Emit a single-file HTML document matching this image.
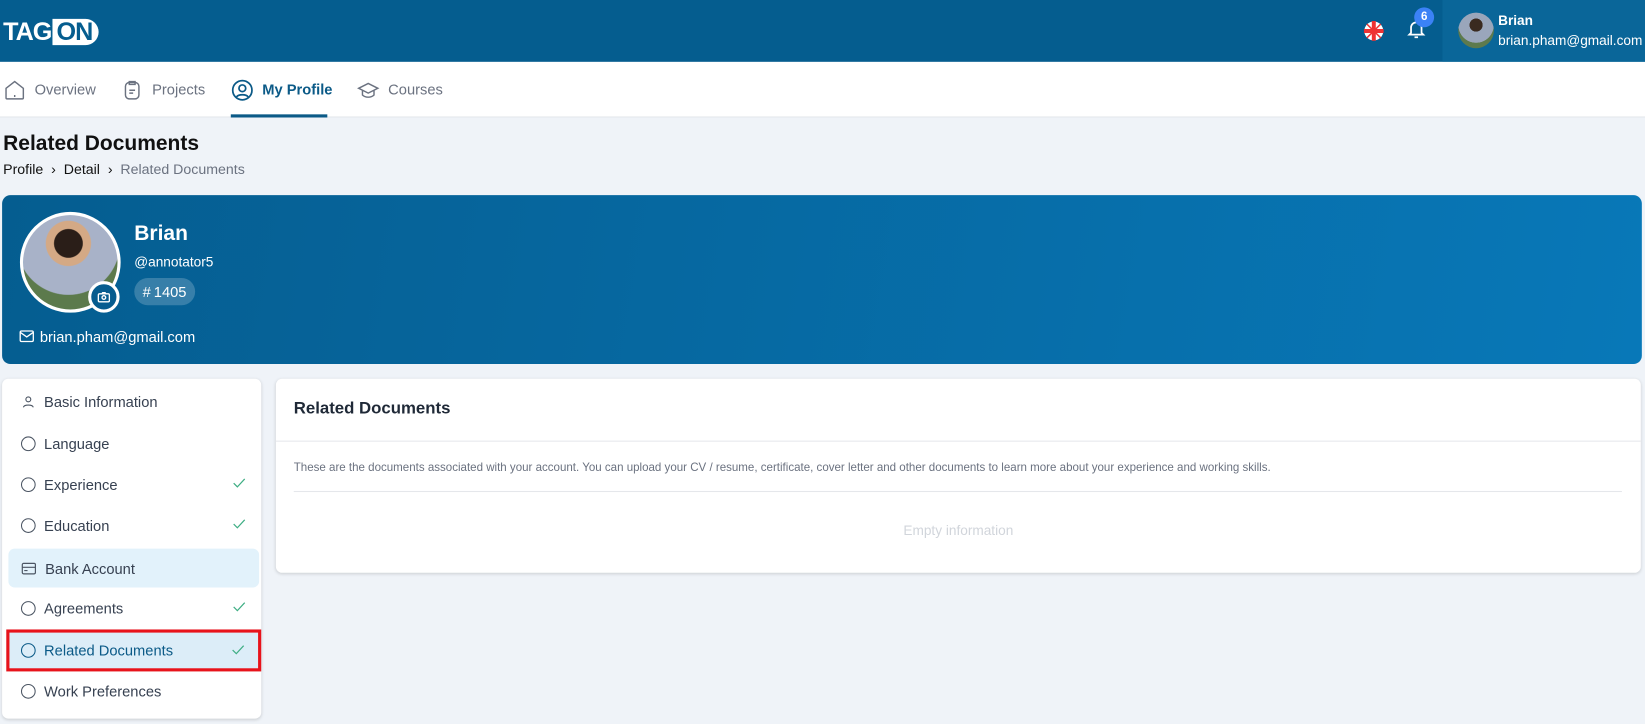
<!DOCTYPE html>
<html><head><meta charset="utf-8"><style>
*{box-sizing:border-box;margin:0;padding:0}
body{width:1645px;height:722px;overflow:hidden;background:#eff3f8;font-family:"Liberation Sans",Arial,sans-serif;color:#1f2937;position:relative}
.wrap{position:absolute;left:0;top:0;width:1568px;height:690px;transform:scale(1.0491);transform-origin:0 0}
.hdr{position:absolute;left:0;top:0;width:1568px;height:59px;background:#055d8f}
.logo{position:absolute;left:3px;top:17px;color:#fff;font-weight:bold;font-size:24px;letter-spacing:-1px}
.logo span{display:inline-block;background:#fff;color:#055d8f;border-radius:0 13px 13px 0;padding:0 6px 0 4px;margin-left:1px;height:25px;line-height:25px}
.user{position:absolute;left:1375px;top:0;width:193px;height:59px;background:#0a6699}
.nav{position:absolute;left:0;top:59px;width:1568px;height:53px;background:#fff;border-bottom:1px solid #e3e7ec}
.ni{position:absolute;top:0;height:53px;line-height:53px;font-size:14px;color:#6b7280;display:flex;align-items:center;gap:8px}
.ni svg{width:22px;height:22px}
.card{position:absolute;background:#fff;border-radius:6px;box-shadow:0 1px 3px rgba(0,0,0,.15)}
.si{position:absolute;left:6px;width:239px;height:37px;display:flex;align-items:center;padding-left:12px;font-size:14px;color:#374151;gap:8px}
.si .c{width:14px;height:14px;border:1.5px solid #4b5563;border-radius:50%}
.chk{position:absolute;right:12px;top:10px}
</style></head><body>
<div class="wrap">
<div class="hdr">
 <div class="logo">TAG<span>ON</span></div>
 <svg style="position:absolute;left:1300px;top:20px" width="19" height="19" viewBox="0 0 20 20"><circle cx="10" cy="10" r="9.5" fill="#fff"/><path d="M0 10H20M10 0V20" stroke="#e33" stroke-width="4"/><path d="M3 3L17 17M17 3L3 17" stroke="#e33" stroke-width="1.5"/></svg>
 <svg style="position:absolute;left:1340px;top:18px" width="20" height="20" viewBox="0 0 24 24" fill="none" stroke="#fff" stroke-width="2"><path d="M6 16V10a6 6 0 0112 0v6l2 2H4z M10 21h4"/></svg>
 <div style="position:absolute;left:1348px;top:7px;width:19px;height:19px;border-radius:50%;background:#3b82f6;color:#fff;font-size:11px;font-weight:bold;text-align:center;line-height:19px">6</div>
 <div class="user">
  <div style="position:absolute;left:15px;top:12px;width:34px;height:34px;border-radius:50%;background:radial-gradient(circle at 50% 35%,#3a2a20 0 22%,#9aa6bb 23% 60%,#5d7a4d 61%)"></div>
  <div style="position:absolute;left:53px;top:12px;color:#fff;font-size:13px;font-weight:bold">Brian</div>
  <div style="position:absolute;left:53px;top:31px;color:#fff;font-size:13px">brian.pham@gmail.com</div>
 </div>
</div>
<div class="nav">
 <div class="ni" style="left:3px"><svg viewBox="0 0 24 24" fill="none" stroke="#6b7280" stroke-width="1.5"><path d="M3 10L12 3l9 7v10a1 1 0 01-1 1H4a1 1 0 01-1-1z M12 17v2"/></svg>Overview</div>
 <div class="ni" style="left:115px"><svg viewBox="0 0 24 24" fill="none" stroke="#6b7280" stroke-width="1.5"><rect x="5" y="4" width="14" height="17" rx="4"/><path d="M9 3h6v3H9z M9 12h6M9 15h4"/></svg>Projects</div>
 <div class="ni" style="left:220px;color:#0b5a87;font-weight:bold"><svg viewBox="0 0 24 24" fill="none" stroke="#0b5a87" stroke-width="1.8"><circle cx="12" cy="12" r="10"/><circle cx="12" cy="10" r="3.5"/><path d="M6 19c2-3 10-3 12 0"/></svg>My Profile</div>
 <div style="position:absolute;left:220px;top:50px;width:92px;height:3px;background:#0b5a87"></div>
 <div class="ni" style="left:340px"><svg viewBox="0 0 24 24" fill="none" stroke="#6b7280" stroke-width="1.5"><path d="M2 10l10-5 10 5-10 5z M6 12v5c3 3 9 3 12 0v-5"/></svg>Courses</div>
</div>
<div style="position:absolute;left:3px;top:126px;font-size:20px;font-weight:bold;color:#111">Related Documents</div>
<div style="position:absolute;left:3px;top:154px;font-size:13.5px;color:#111">Profile &nbsp;›&nbsp; Detail &nbsp;›&nbsp; <span style="color:#6b7280">Related Documents</span></div>
<div style="position:absolute;left:2px;top:186px;width:1563px;height:161px;border-radius:8px;background:linear-gradient(100deg,#055d90,#0878b8)">
 <div style="position:absolute;left:17px;top:16px;width:96px;height:96px;border-radius:50%;border:3px solid #fff;background:radial-gradient(circle at 48% 30%,#2a1e18 0 17%,#d4a985 18% 27%,#a8b2c8 28% 62%,#5c7a4c 63%)"></div>
 <div style="position:absolute;left:82px;top:82px;width:30px;height:30px;border-radius:50%;background:#065c8f;border:3px solid #fff"><svg style="position:absolute;left:5px;top:5px" width="14" height="14" viewBox="0 0 24 24" fill="none" stroke="#fff" stroke-width="2.2"><rect x="3" y="7" width="18" height="13" rx="2"/><circle cx="12" cy="13" r="3"/><path d="M9 7l1-2h4l1 2"/></svg></div>
 <div style="position:absolute;left:126px;top:26px;color:#fff;font-size:20px;font-weight:bold">Brian</div>
 <div style="position:absolute;left:126px;top:56px;color:#fff;font-size:13px">@annotator5</div>
 <div style="position:absolute;left:126px;top:79px;height:26px;padding:0 8px;border-radius:13px;background:rgba(255,255,255,.2);color:#fff;font-size:14px;line-height:26px">#&thinsp;1405</div>
 <svg style="position:absolute;left:16px;top:128px" width="15" height="13" viewBox="0 0 24 20" fill="none" stroke="#fff" stroke-width="2"><rect x="2" y="2" width="20" height="16" rx="2"/><path d="M2 4l10 7 10-7"/></svg>
 <div style="position:absolute;left:36px;top:127px;color:#fff;font-size:14px">brian.pham@gmail.com</div>
</div>
<div class="card" style="left:2px;top:361px;width:247px;height:324px">
 <div class="si" style="top:3px"><svg width="14" height="14" viewBox="0 0 24 24" fill="none" stroke="#4b5563" stroke-width="1.8"><circle cx="12" cy="8" r="4"/><path d="M4 21c1-5 15-5 16 0"/></svg>Basic Information</div>
 <div class="si" style="top:43px"><div class="c"></div>Language</div>
 <div class="si" style="top:82px"><div class="c"></div>Experience<svg class="chk" width="14" height="14" viewBox="0 0 24 24" fill="none" stroke="#3fae84" stroke-width="2"><path d="M3 13l6 6L21 6"/></svg></div>
 <div class="si" style="top:121px"><div class="c"></div>Education<svg class="chk" width="14" height="14" viewBox="0 0 24 24" fill="none" stroke="#3fae84" stroke-width="2"><path d="M3 13l6 6L21 6"/></svg></div>
 <div class="si" style="top:162px;background:#e2f2fb;border-radius:6px"><svg width="15" height="14" viewBox="0 0 24 20" fill="none" stroke="#4b5563" stroke-width="1.8"><rect x="2" y="2" width="20" height="16" rx="2"/><path d="M2 8h20M5 13h5"/></svg>Bank Account</div>
 <div class="si" style="top:200px"><div class="c"></div>Agreements<svg class="chk" width="14" height="14" viewBox="0 0 24 24" fill="none" stroke="#3fae84" stroke-width="2"><path d="M3 13l6 6L21 6"/></svg></div>
 <div class="si" style="top:239px;left:4px;width:243px;height:40px;background:#dcedf8;border:3px solid #e8131b;color:#0b5a87;padding-left:11px"><div class="c" style="border-color:#0b5a87"></div>Related Documents<svg class="chk" style="top:9px" width="14" height="14" viewBox="0 0 24 24" fill="none" stroke="#3fae84" stroke-width="2"><path d="M3 13l6 6L21 6"/></svg></div>
 <div class="si" style="top:279px"><div class="c"></div>Work Preferences</div>
</div>
<div class="card" style="left:263px;top:361px;width:1301px;height:185px">
 <div style="position:absolute;left:17px;top:20px;font-size:16px;font-weight:bold;color:#1f2937">Related Documents</div>
 <div style="position:absolute;left:0;top:59px;width:100%;height:1px;background:#e5e7eb"></div>
 <div style="position:absolute;left:17px;top:79px;font-size:11px;color:#6b7280">These are the documents associated with your account. You can upload your CV / resume, certificate, cover letter and other documents to learn more about your experience and working skills.</div>
 <div style="position:absolute;left:17px;top:107px;width:1266px;height:1px;background:#e5e7eb"></div>
 <div style="position:absolute;left:0;top:137px;width:100%;text-align:center;font-size:13px;color:#d1d5db">Empty information</div>
</div>
</div>
</body></html>
